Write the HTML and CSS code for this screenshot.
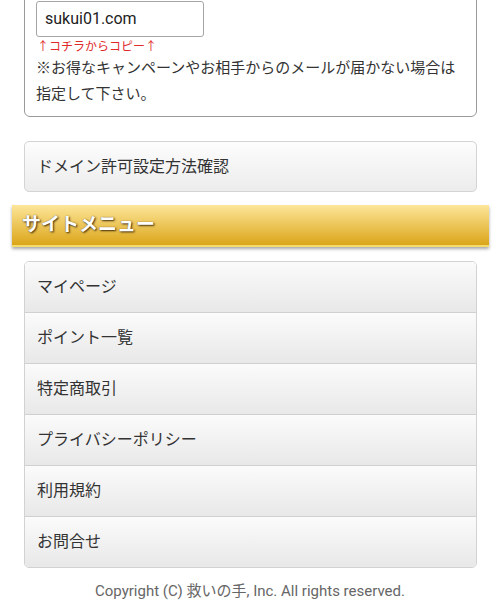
FILE: index.html
```html
<!DOCTYPE html>
<html lang="ja">
<head>
<meta charset="utf-8">
<link rel="stylesheet" href="styles.css">
</head>
<body>
<div class="page">
  <section class="domain-box">
    <div class="domain-input">sukui01.com</div>
    <p class="copy-note">↑コチラからコピー↑</p>
    <p class="domain-text">※お得なキャンペーンやお相手からのメールが届かない場合は指定して下さい。</p>
  </section>
  <a class="btn" href="#">ドメイン許可設定方法確認</a>
  <h2 class="section-title">サイトメニュー</h2>
  <ul class="menu">
    <li><a href="#">マイページ</a></li>
    <li><a href="#">ポイント一覧</a></li>
    <li><a href="#">特定商取引</a></li>
    <li><a href="#">プライバシーポリシー</a></li>
    <li><a href="#">利用規約</a></li>
    <li><a href="#">お問合せ</a></li>
  </ul>
  <footer class="footer">Copyright (C) 救いの手, Inc. All rights reserved.</footer>
</div>
</body>
</html>
```
FILE: styles.css
```css
html, body {
  margin: 0;
  padding: 0;
  background: #fff;
}
body {
  font-family: Roboto, "Noto Sans CJK JP", sans-serif;
  color: #333;
  overflow: hidden;
}
.page {
  margin-top: -12px;
  display: flex;
  flex-direction: column;
}
.domain-box {
  margin: 0 23px 0 24px;
  border: 1px solid #9a9a9a;
  border-radius: 6px;
  padding: 12px 11px 9px 11px;
}
.domain-input {
  width: 158px;
  height: 34px;
  border: 1px solid #a5a5a5;
  border-radius: 3px;
  padding: 0 0 0 8px;
  font-size: 16px;
  line-height: 34px;
  color: #222;
}
.copy-note {
  margin: 2px 0 0 1px;
  font-size: 12px;
  line-height: 16px;
  color: #e02a2a;
}
.domain-text {
  margin: 0;
  font-size: 15px;
  line-height: 26px;
  color: #333;
}
.btn {
  display: block;
  margin: 24px 23px 0 24px;
  height: 49px;
  line-height: 49px;
  padding: 0 12px;
  border: 1px solid #d4d4d4;
  border-radius: 5px;
  background: linear-gradient(#fdfdfd, #ececec);
  color: #333;
  font-size: 16px;
  text-decoration: none;
}
.section-title {
  margin: 13px 11px 0 12px;
  height: 40px;
  line-height: 40px;
  padding: 0 10px;
  font-size: 19px;
  font-weight: bold;
  color: #fff;
  text-shadow: 1px 1px 2px rgba(50, 30, 0, 0.9), 0 0 1px rgba(50, 30, 0, 0.6);
  background: linear-gradient(#fde69a, #dba518);
  border-bottom: 2px solid #f4dc6a;
  box-shadow: 0 2px 3px rgba(0, 0, 0, 0.35);
}
.menu {
  list-style: none;
  margin: 14px 23px 0 24px;
  padding: 0;
  border: 1px solid #d2d2d2;
  border-radius: 5px;
  overflow: hidden;
}
.menu li + li {
  border-top: 1px solid #d0d0d0;
}
.menu a {
  display: block;
  height: 50px;
  line-height: 50px;
  padding: 0 12px;
  background: linear-gradient(#fbfbfb, #e8e8e8);
  color: #333;
  font-size: 16px;
  text-decoration: none;
}
.footer {
  margin-top: 12px;
  text-align: center;
  font-size: 15px;
  line-height: 22px;
  color: #666;
}
```
